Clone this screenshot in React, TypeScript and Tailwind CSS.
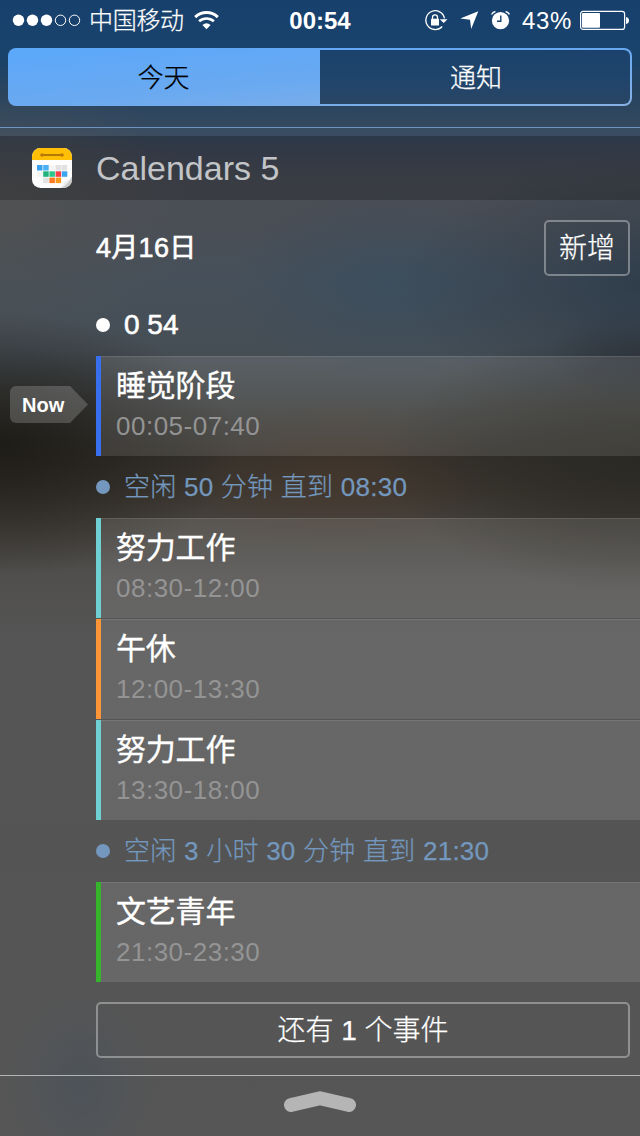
import React from "react";

type Event = { title: string; time: string; color: string };

const morning: Event[] = [
  { title: "努力工作", time: "08:30-12:00", color: "bg-[#6fd0d4]" },
  { title: "午休", time: "12:00-13:30", color: "bg-[#fb9538]" },
  { title: "努力工作", time: "13:30-18:00", color: "bg-[#6fd0d4]" },
];

function EventCard({ title, time, color }: Event) {
  return (
    <div className="flex h-[100px]">
      <div className={`w-[5px] ${color}`} />
      <div className="flex-1 border-t border-white/10 bg-white/[0.11] pl-[15px]">
        <div className="mt-[9px] h-[40px] text-[30px] leading-[40px] font-normal tracking-[-0.2px] text-white [-webkit-text-stroke:0.35px_white]">{title}</div>
        <div className="text-[26px] leading-[40px] tracking-[0.5px] text-[#949494]">{time}</div>
      </div>
    </div>
  );
}

function FreeRow({ children }: { children: React.ReactNode }) {
  return (
    <div className="flex h-[62px] items-center text-[26px] tracking-[0.25px] text-[#7397bd]">
      <span className="mr-[14px] size-[14px] rounded-full bg-[#7397bd]" />
      <span className="pt-px font-light [-webkit-text-stroke:0.25px_#7397bd]">{children}</span>
    </div>
  );
}

function StatusBar() {
  return (
    <div className="relative flex h-[40px] items-center text-[24px] text-white">
      <svg className="ml-[12px] shrink-0" width="69" height="14" viewBox="0 0 69 14" fill="white">
        <circle cx="6.5" cy="7.3" r="5.7" />
        <circle cx="20.5" cy="7.3" r="5.7" />
        <circle cx="34.5" cy="7.3" r="5.7" />
        <circle cx="48.5" cy="7.3" r="5.2" fill="none" stroke="white" />
        <circle cx="62.5" cy="7.3" r="5.2" fill="none" stroke="white" />
      </svg>
      <span className="ml-[8px] pt-[2px] font-light tracking-[-0.3px] [-webkit-text-stroke:0.25px_white]">中国移动</span>
      <svg className="ml-[10px] shrink-0" width="26" height="20" viewBox="0 0 26 20" fill="none" stroke="white">
        <path d="M1.2 7.1a16.5 16.5 0 0 1 22.6 0" strokeWidth="3" />
        <path d="M5.1 11.3a11 11 0 0 1 14.8 0" strokeWidth="2.6" />
        <path d="M8.4 15Q12.5 11.6 16.6 15L12.5 19.2z" fill="white" stroke="none" />
      </svg>
      <div className="absolute left-1/2 -translate-x-1/2 pt-[2px] font-bold">00:54</div>
      <div className="mr-[10px] ml-auto flex items-center">
        <svg width="24" height="22" viewBox="0 0 24 22" fill="none" stroke="white">
          <path d="M20.5 9.3A9.4 9.4 0 1 0 18.2 17.5" strokeWidth="1.3" />
          <path d="M15.8 10.2H23.5L19.7 14z" fill="white" stroke="none" />
          <rect x="7" y="9.8" width="8" height="6.6" rx="0.5" fill="white" stroke="none" />
          <path d="M8.5 10V8.3a2.5 2.5 0 0 1 5 0V10" strokeWidth="1.3" />
        </svg>
        <svg className="ml-[11px]" width="20" height="20" viewBox="0 0 20 20" fill="white">
          <path d="M19.3 1.2 12.2 19 11 9.8 1.3 8.6z" />
        </svg>
        <svg className="ml-[11px]" width="21" height="20" viewBox="0 0 21 20" fill="none">
          <circle cx="10.5" cy="10.7" r="8.6" fill="white" />
          <path d="M1.6 4.6Q2.6 2 5.4 1.5M15.6 1.5Q18.4 2 19.4 4.6" stroke="white" strokeWidth="1.4" />
          <path d="M10.8 5.5V11.2H7" stroke="#18426d" strokeWidth="1.4" />
        </svg>
        <span className="ml-[11px] w-[58px] pt-[2px] tracking-[0.7px]">43%</span>
        <svg width="50" height="20" viewBox="0 0 50 20" fill="none">
          <rect x="0.6" y="1.4" width="44" height="18" rx="2.5" stroke="white" strokeWidth="1.2" />
          <rect x="2" y="3.1" width="18" height="14.7" rx="1" fill="white" />
          <path d="M46 7q3 .5 3 3.5t-3 3.5z" fill="white" />
        </svg>
      </div>
    </div>
  );
}

function CalendarIcon() {
  const cells = [
    ["#3aa0ec", 5, 17], ["#4ab0f4", 11.2, 17], ["#f4f4f4", 17.4, 17], ["#e2e2e2", 23.6, 17], ["#e2e2e2", 29.6, 17],
    ["#f4f4f4", 5, 23.3], ["#21b17c", 11.2, 23.3], ["#2cc58a", 17.4, 23.3], ["#f83e48", 23.6, 23.3], ["#3da5f0", 29.8, 23.3],
    ["#e2e2e2", 11.2, 29.6], ["#fb7a22", 17.4, 29.6], ["#f99a1b", 23.6, 29.6],
  ] as const;
  return (
    <svg width="40" height="40" viewBox="0 0 40 40">
      <rect width="40" height="40" rx="8.5" fill="#fdfdfd" />
      <path d="M0 12V8.5A8.5 8.5 0 0 1 8.5 0h23A8.5 8.5 0 0 1 40 8.5V12z" fill="#ffbf05" />
      <path d="M10 7h20" stroke="#986205" strokeWidth="1.5" />
      <circle cx="10" cy="7" r="1.8" fill="#bd7909" />
      <circle cx="30" cy="7" r="1.8" fill="#bd7909" />
      {cells.map(([fill, x, y]) => (
        <rect key={`${x}-${y}`} x={x} y={y} width="5.5" height="5.5" fill={fill} />
      ))}
      <path d="M28.5 40Q34 38 40 28.5V31.5A8.5 8.5 0 0 1 31.5 40z" fill="#c9c9c9" />
      <path d="M28.5 40Q32 37.5 32.5 34Q36.5 33 40 28.5Q36 37 28.5 40z" fill="#ececec" />
    </svg>
  );
}

export default function App() {
  return (
    <div className="h-[1136px] w-[640px] overflow-hidden bg-[linear-gradient(180deg,#17416d_0px,#19426c_50px,#26435f_90px,#34495f_128px,#40495a_150px,#4a4e56_185px,#4a4e55_220px,#46505a_280px,#464e55_350px,#3f4242_400px,#35312b_455px,#3e3831_490px,#45413c_520px,#504f4d_575px,#555555_640px,#545454_850px,#565656_1136px)] font-['Liberation_Sans','Noto_Sans_CJK_SC',sans-serif]">
      <div className="h-full bg-[radial-gradient(ellipse_240px_130px_at_0px_445px,rgba(28,26,21,0.9),rgba(30,28,24,0.55)_45%,transparent),radial-gradient(ellipse_260px_130px_at_640px_460px,rgba(41,40,35,0.9),rgba(41,40,35,0.5)_50%,transparent),radial-gradient(ellipse_240px_130px_at_640px_285px,rgba(40,55,70,0.75),transparent),radial-gradient(ellipse_90px_50px_at_640px_355px,rgba(46,48,56,0.7),transparent),radial-gradient(ellipse_160px_100px_at_390px_285px,rgba(55,76,94,0.65),transparent),radial-gradient(ellipse_200px_140px_at_0px_210px,rgba(83,83,80,0.6),transparent),radial-gradient(ellipse_150px_80px_at_340px_475px,rgba(78,57,42,0.4),transparent),radial-gradient(ellipse_75px_95px_at_80px_1085px,rgba(74,82,91,0.7),transparent)]">
        <StatusBar />
        <div className="h-[87px] px-[8px] pt-[8px]">
          <div className="flex h-[58px] overflow-hidden rounded-[8px] bg-[linear-gradient(175deg,#5ba8fa,#69a9f1_50%,#86b1e4)] p-[2px] text-[26px] font-light">
            <div className="flex flex-1 items-center justify-center pt-[2px] pr-[3px] text-black [-webkit-text-stroke:0.25px_black]">今天</div>
            <div className="flex w-[310px] items-center justify-center rounded-r-[6px] bg-[linear-gradient(180deg,#1b426c,#1f446b_50%,#294665)] pt-[2px] pl-[2px] text-white [-webkit-text-stroke:0.25px_white]">通知</div>
          </div>
        </div>
        <div className="h-px bg-[#6f94c4]" />
        <div className="h-[8px] bg-white/[0.02]" />
        <div className="flex h-[64px] items-center gap-[24px] bg-black/[0.22] pl-[32px]">
          <CalendarIcon />
          <span className="text-[34px] text-[#c2c4c7]">Calendars 5</span>
        </div>
        <div className="flex h-[875px]">
          <div className="w-[96px] pt-[186px] pl-[10px]">
            <div className="flex h-[37px] w-[78px] items-center rounded-l-[6px] bg-white/[0.19] pt-px pl-[12px] text-[20px] font-bold text-white [clip-path:polygon(0_0,60px_0,100%_50%,60px_100%,0_100%)]">Now</div>
          </div>
          <div className="flex-1">
            <div className="flex h-[92px] items-start justify-between pt-[20px] pr-[10px]">
              <div className="flex h-[56px] items-center text-[27px] tracking-[0.3px] text-white [-webkit-text-stroke:0.6px_white]">4月16日</div>
              <div className="flex h-[56px] w-[86px] items-center justify-center rounded-[5px] border-2 border-white/35 pt-[2px] text-[28px] font-light text-white [-webkit-text-stroke:0.25px_white]">新增</div>
            </div>
            <div className="flex h-[64px] items-center pt-[2px] text-[28px] text-white [-webkit-text-stroke:0.6px_white]">
              <span className="mr-[14px] size-[14px] rounded-full bg-white" />0 54
            </div>
            <EventCard title="睡觉阶段" time="00:05-07:40" color="bg-[#376fef]" />
            <FreeRow>空闲 50 分钟 直到 08:30</FreeRow>
            <div className="flex flex-col gap-px">
              {morning.map((event) => <EventCard key={event.time} {...event} />)}
            </div>
            <FreeRow>空闲 3 小时 30 分钟 直到 21:30</FreeRow>
            <EventCard title="文艺青年" time="21:30-23:30" color="bg-[#36b42c]" />
            <div className="mt-[20px] mr-[10px] flex h-[56px] items-center justify-center rounded-[5px] border-2 border-white/35 pt-[2px] text-[28px] font-light text-white [-webkit-text-stroke:0.25px_white]">还有 1 个事件</div>
          </div>
        </div>
        <div className="h-px bg-[#b4b4b4]" />
        <div className="flex h-[60px] justify-center pt-[13px]">
          <svg width="72" height="24" viewBox="0 0 72 24" fill="none">
            <path d="M7 16 36 9.3 65 16" stroke="#b5b5b5" strokeWidth="14" strokeLinecap="round" strokeLinejoin="round" />
          </svg>
        </div>
      </div>
    </div>
  );
}
